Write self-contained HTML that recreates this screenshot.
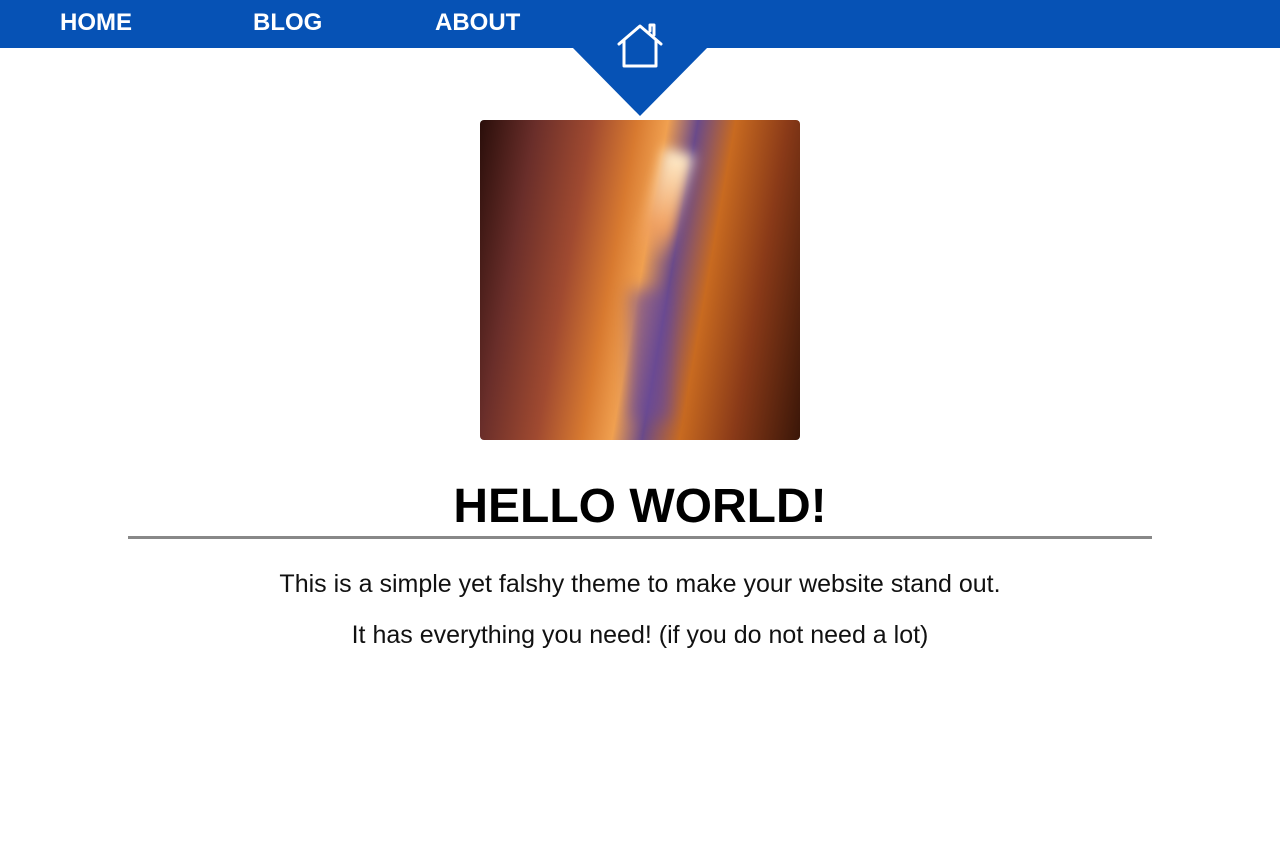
<!DOCTYPE html>
<html><head><style>
body{margin:0;background:#fff;width:1280px;height:856px;overflow:hidden;font-family:"Liberation Sans",sans-serif;position:relative}
.bar{position:absolute;left:0;top:0;width:1280px;height:48px;background:#0652b5}
.tri{position:absolute;left:572px;top:47px;width:0;height:0;border-left:68px solid transparent;border-right:68px solid transparent;border-top:69px solid #0652b5}
.nav{position:absolute;top:8px;color:#fff;font-weight:bold;font-size:24px;line-height:30px}
.img{position:absolute;left:480px;top:120px;width:320px;height:320px;border-radius:4px;overflow:hidden;
background:linear-gradient(100deg,#2a0e0a 0%,#6a2e2a 15%,#a04a30 30%,#d87a30 42%,#f0a050 50%,#6a4a8a 58%,#c86a20 68%,#8a3a18 82%,#3a1608 100%)}
h1{position:absolute;left:0;width:1280px;top:479px;margin:0;text-align:center;font-size:48px;line-height:56px;font-weight:900;letter-spacing:0px;color:#000}
.hr{position:absolute;left:128px;top:536px;width:1024px;height:3px;background:#888}
p{position:absolute;left:0;width:1280px;margin:0;text-align:center;font-size:25px;color:#111}
</style></head><body>
<div class="bar"></div><div class="tri"></div>
<div class="nav" style="left:60px">HOME</div>
<div class="nav" style="left:253px">BLOG</div>
<div class="nav" style="left:435px">ABOUT</div>
<svg style="position:absolute;left:614px;top:22px" width="52" height="48" viewBox="0 0 52 48"><path d="M5 22 L26 4 L47 22 M10 18 V44 H42 V18 M36 9 V3 H40 V13" fill="none" stroke="#fff" stroke-width="3" stroke-linecap="round" stroke-linejoin="round"/></svg>
<div class="img"><div style="position:absolute;left:170px;top:30px;width:30px;height:110px;background:linear-gradient(#fff0d0,#f0a060 70%,transparent);transform:rotate(15deg);filter:blur(6px)"></div><div style="position:absolute;left:150px;top:170px;width:40px;height:130px;background:#6a4a9a;opacity:.6;filter:blur(8px)"></div></div>
<h1>HELLO WORLD!</h1>
<div class="hr"></div>
<p style="top:570px">This is a simple yet falshy theme to make your website stand out.</p>
<p style="top:621px">It has everything you need! (if you do not need a lot)</p>
</body></html>
